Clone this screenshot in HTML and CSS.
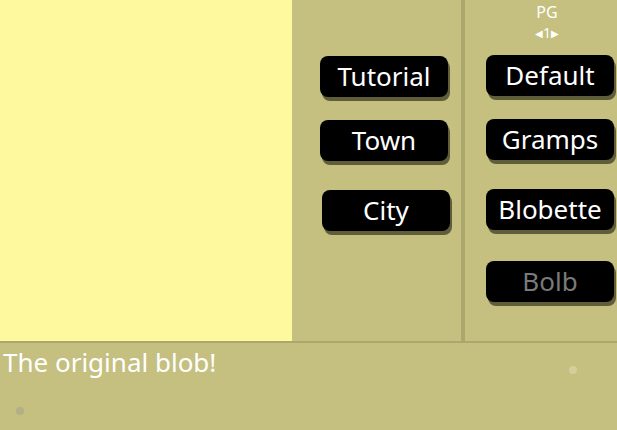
FILE: index.html
```html
<!DOCTYPE html>
<html lang="en">
  <head>
    <meta charset="UTF-8" />
    <meta name="viewport" content="width=device-width, initial-scale=1.0" />
    <title>Blob Select</title>
    <link rel="stylesheet" href="styles.css">
  </head>
  <body>
    <section class="game">
      <div class="top">
        <div class="preview"></div>
        <div class="levels">
          <button class="btn lvl-tutorial">Tutorial</button>
          <button class="btn lvl-town">Town</button>
          <button class="btn lvl-city">City</button>
        </div>
        <div class="divider"></div>
        <div class="skins">
          <div class="pager">
            <span class="pg">PG</span>
            <span class="pg-nav"><span class="arrow">&#9664;</span>1<span class="arrow">&#9654;</span></span>
          </div>
          <button class="btn skin-default">Default</button>
          <button class="btn skin-gramps">Gramps</button>
          <button class="btn skin-blobette">Blobette</button>
          <button class="btn skin-bolb locked">Bolb</button>
        </div>
      </div>
      <div class="bottom">
        <p class="desc">The original blob!</p>
        <span class="dot dot-left"></span>
        <span class="dot dot-right"></span>
      </div>
    </section>
  </body>
</html>
```

FILE: styles.css
```css
body {
  margin: 0;
  padding: 0;
  font-family: "Noto Sans", "Open Sans", sans-serif;
  background-color: #c5c080;
  overflow: hidden;
}

.game {
  width: 617px;
  height: 430px;
  display: flex;
  flex-direction: column;
}

.top {
  display: flex;
  height: 341px;
  border-bottom: 2px solid #aca76c;
}

.preview {
  width: 292px;
  background-color: #fef89e;
}

.levels {
  width: 169px;
  display: flex;
  flex-direction: column;
  align-items: flex-start;
  padding-left: 28px;
  box-sizing: border-box;
}

.divider {
  width: 4px;
  background-color: #aca76c;
}

.skins {
  width: 152px;
  display: flex;
  flex-direction: column;
  align-items: flex-start;
  padding-left: 21px;
  box-sizing: border-box;
}

.pager {
  width: 128px;
  height: 40px;
  display: flex;
  flex-direction: column;
  align-items: center;
  color: #fff;
  padding: 1px 6px 0 0;
  box-sizing: border-box;
}

.pg {
  font-size: 16px;
}

.pg-nav {
  display: flex;
  align-items: center;
  font-size: 14px;
}

.arrow {
  font-size: 10px;
}

.btn {
  width: 128px;
  height: 41px;
  padding: 0;
  border: none;
  border-radius: 8px;
  background-color: #000;
  color: #fff;
  font-family: "Noto Sans", "Open Sans", sans-serif;
  font-size: 26px;
  line-height: 41px;
  box-shadow: 2px 4px 0 #605d3b;
  cursor: pointer;
}

.lvl-tutorial {
  margin-top: 56px;
}

.lvl-town {
  margin-top: 23px;
}

.lvl-city {
  margin-top: 29px;
  margin-left: 2px;
}

.skin-default {
  margin-top: 15px;
}

.skin-gramps {
  margin-top: 23px;
}

.skin-blobette {
  margin-top: 29px;
}

.skin-bolb {
  margin-top: 31px;
}

.locked {
  color: #7a7a7a;
}

.bottom {
  position: relative;
  flex: 1;
}

.desc {
  margin: 0;
  padding: 2px 0 0 3px;
  color: #fff;
  font-size: 26px;
  line-height: 34px;
}

.dot {
  position: absolute;
  width: 8px;
  height: 8px;
  border-radius: 50%;
}

.dot-left {
  left: 16px;
  top: 64px;
  background-color: #b3af86;
}

.dot-right {
  left: 569px;
  top: 23px;
  background-color: #d3cf9c;
}
```
